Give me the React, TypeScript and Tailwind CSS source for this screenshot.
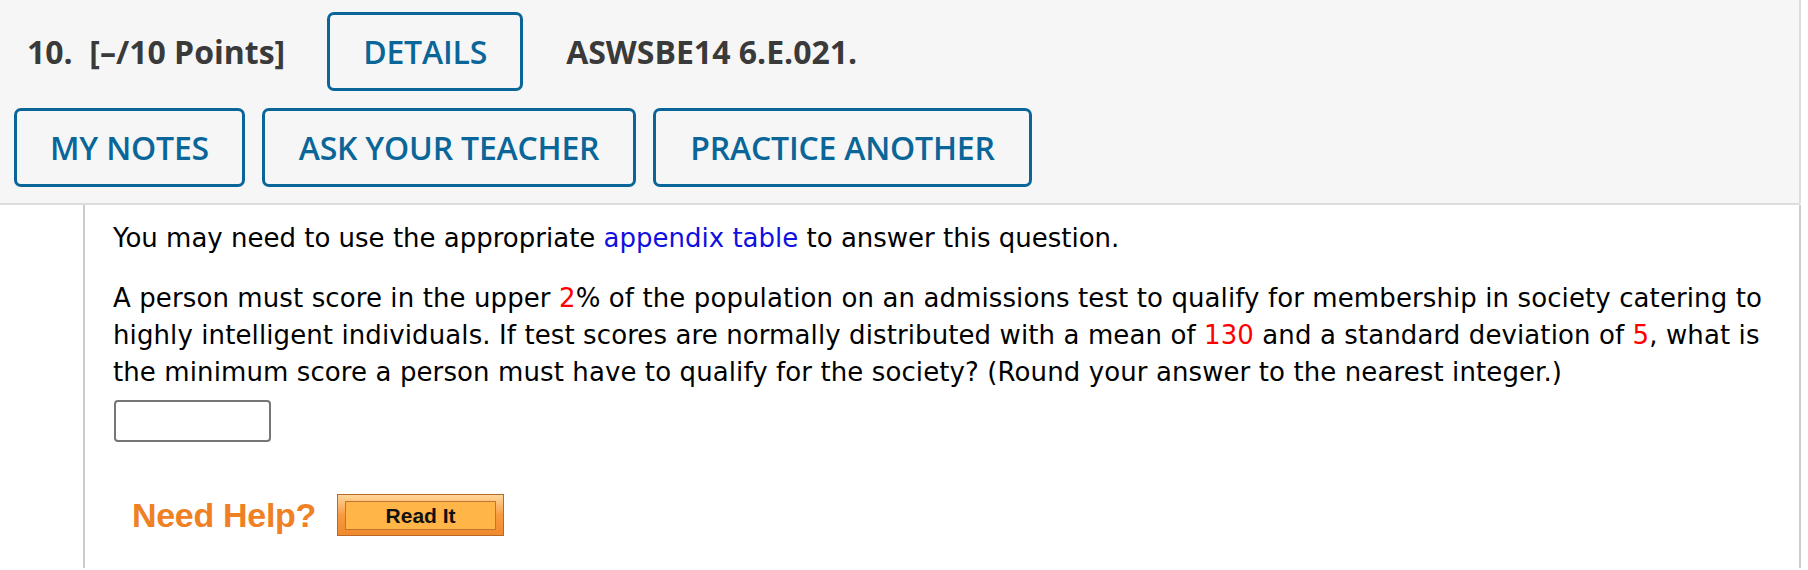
import React from "react";

const blueBtn =
  "h-[79px] flex items-center justify-center border-[3px] border-[#0a6699] rounded-[7px] text-[#0a6699] text-[32px] font-semibold tracking-[-0.2px] bg-[#f6f6f6]";

export default function App() {
  return (
    <div className="w-[1808px] h-[570px] bg-white overflow-hidden">
      <div className="w-[1801px]">
        <header
          className="bg-[#f6f6f6] border-b-2 border-r-2 border-[#dddddd] rounded-br-[3px] pt-[12px] pb-[16px] pl-[14px]"
          style={{ fontFamily: '"Open Sans", "Noto Sans", sans-serif' }}
        >
          <div className="flex items-center h-[79px]">
            <span className="pl-[13px] font-bold text-[32px] text-[#3a3a3a] whitespace-pre">
              10.  [–/10 Points]
            </span>
            <div className={blueBtn + " w-[196px] ml-[42px]"}>DETAILS</div>
            <span className="ml-[43px] font-bold text-[32px] text-[#3a3a3a]">
              ASWSBE14 6.E.021.
            </span>
          </div>
          <div className="flex gap-[17px] mt-[17px]">
            <div className={blueBtn + " w-[231px]"}>MY NOTES</div>
            <div className={blueBtn + " w-[374px]"}>ASK YOUR TEACHER</div>
            <div className={blueBtn + " w-[379px]"}>PRACTICE ANOTHER</div>
          </div>
        </header>
        <div className="flex h-[363px]">
          <div className="w-[83px] shrink-0" />
          <div
            className="flex-1 border-l-2 border-r-2 border-l-[#cccccc] border-r-[#cccccc] pl-[28px] pr-[26px] pt-[15px] text-[26px] leading-[37px] text-black"
            style={{ fontFamily: '"DejaVu Sans", Verdana, sans-serif' }}
          >
            <p>
              You may need to use the appropriate{" "}
              <span className="text-[#1010e0]">appendix table</span> to answer this question.
            </p>
            <p className="mt-[23px] tracking-[0.1px]">
              A person must score in the upper <span className="text-[#ff0000]">2</span>% of the
              population on an admissions test to qualify for membership in society catering to
              highly intelligent individuals. If test scores are normally distributed with a mean
              of <span className="text-[#ff0000]">130</span> and a standard deviation of{" "}
              <span className="text-[#ff0000]">5</span>, what is the minimum score a person must
              have to qualify for the society? (Round your answer to the nearest integer.)
            </p>
            <div className="mt-[9px] ml-[1px] w-[157px] h-[42px] border-2 border-[#767676] rounded-[4px] bg-white" />
            <div
              className="flex items-center mt-[52px] ml-[19px]"
              style={{ fontFamily: '"Liberation Sans", Arial, sans-serif' }}
            >
              <span className="text-[34px] leading-[40px] font-bold text-[#ef8024] tracking-[-0.3px]">
                Need Help?
              </span>
              <div className="ml-[21px] w-[167px] h-[42px] bg-gradient-to-b from-[#ffd79a] via-[#f79a3e] to-[#f08a2c] border border-[#b76a27] px-[7px] pt-[6px] pb-[5px]">
                <div className="h-full border border-[#c27530] bg-[#ffb547] flex items-center justify-center text-[21px] font-bold text-[#111]">
                  Read It
                </div>
              </div>
            </div>
          </div>
        </div>
      </div>
    </div>
  );
}
